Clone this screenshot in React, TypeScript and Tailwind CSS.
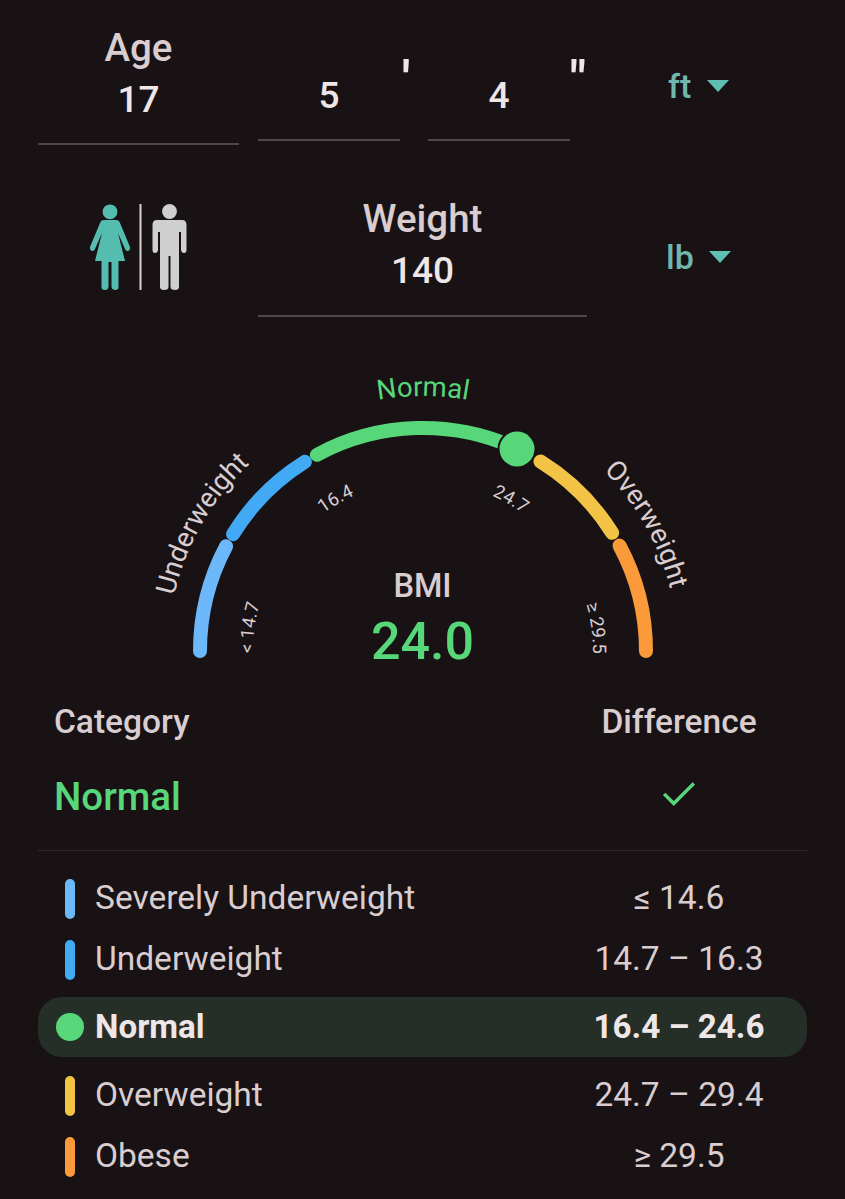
import React from 'react';

const CX = 423;
const CY = 651;

// point on the gauge, deg runs clockwise from the left end
function pt(r: number, deg: number) {
  const a = (deg * Math.PI) / 180;
  return [CX - r * Math.cos(a), CY - r * Math.sin(a)];
}

function arc(r: number, from: number, to: number) {
  const [x1, y1] = pt(r, from);
  const [x2, y2] = pt(r, to);
  return `M ${x1} ${y1} A ${r} ${r} 0 0 1 ${x2} ${y2}`;
}

const segments = [
  { from: 0, to: 28, color: '#6cb8fb' },
  { from: 31.6, to: 58, color: '#42a9f5' },
  { from: 61.6, to: 115, color: '#58d67a' },
  { from: 121.8, to: 148, color: '#f3c345' },
  { from: 151.8, to: 180, color: '#fb9a3a' },
];

const outerLabels = [
  { text: 'Underweight', at: '16.6%', fill: '#d9cdd0' },
  { text: 'Normal', at: '50%', fill: '#58d67a' },
  { text: 'Overweight', at: '83.6%', fill: '#d9cdd0' },
];

const innerLabels = [
  { text: '< 14.7', at: '4.3%' },
  { text: '16.4', at: '33.4%' },
  { text: '24.7', at: '66.7%' },
  { text: '≥ 29.5', at: '95.8%' },
];

const ranges = [
  { name: 'Severely Underweight', range: '≤ 14.6', color: 'bg-[#6cb8fb]' },
  { name: 'Underweight', range: '14.7 – 16.3', color: 'bg-[#42a9f5]' },
  { name: 'Normal', range: '16.4 – 24.6', active: true },
  { name: 'Overweight', range: '24.7 – 29.4', color: 'bg-[#f3c345]' },
  { name: 'Obese', range: '≥ 29.5', color: 'bg-[#fb9a3a]' },
];

function Caret() {
  return <span className="w-0 h-0 border-x-[11px] border-x-transparent border-t-[12px] border-t-[#5fbfb0]" />;
}

function People() {
  return (
    <svg width="140" height="115" viewBox="0 0 140 115" className="block">
      <circle cx="40" cy="21.8" r="7.4" fill="#55bdb0" />
      <path
        d="M34 30 H46 Q49 30 50 33 L60 57 Q60.5 60 58 61 Q56 61.5 55 59 L48 43 L55 71 H48.5 V97 Q48.5 100 45.5 100 Q42 100 41.5 97 V72 H38.5 V97 Q38 100 35 100 Q31.5 100 31.5 97 V71 H25 L32 43 L25 59 Q24 61.5 22 61 Q19.5 60 20 57 L30 33 Q31 30 34 30 Z"
        fill="#55bdb0"
      />
      <rect x="69.5" y="14" width="2" height="86" fill="#d8d2d2" />
      <circle cx="99.5" cy="21.5" r="7.4" fill="#cfcfcf" />
      <path
        d="M87 30 H112 Q116.5 30 116.5 35 V60 Q116.5 63 114 63 Q111.5 63 111 60 V42 H109 V97 Q109 100 105 100 Q100.5 100 100.5 97 V66 H98.5 V97 Q98.5 100 94 100 Q90 100 90 97 V42 H88 V60 Q87.5 63 85 63 Q82.5 63 82.5 60 V35 Q82.5 30 87 30 Z"
        fill="#cfcfcf"
      />
    </svg>
  );
}

function Gauge() {
  return (
    <div className="relative h-[340px]">
      <svg width="845" height="340" viewBox="0 350 845 340" className="block" style={{ fontFamily: 'Roboto, sans-serif' }}>
        <defs>
          <path id="outer" d={arc(255, 0, 180)} />
          <path id="inner" d={arc(170, 0, 180)} />
        </defs>
        {segments.map(s => (
          <path key={s.from} d={arc(223, s.from, s.to)} fill="none" stroke={s.color} strokeWidth="14" strokeLinecap="round" />
        ))}
        <circle cx="517" cy="449" r="19.5" fill="#181214" />
        <circle cx="517" cy="449" r="17.5" fill="#58d67a" />
        {outerLabels.map(l => (
          <text key={l.text} fontSize="27.5" fill={l.fill} textAnchor="middle">
            <textPath href="#outer" startOffset={l.at}>{l.text}</textPath>
          </text>
        ))}
        {innerLabels.map(l => (
          <text key={l.text} fontSize="18.5" fill="#d9cdd0" textAnchor="middle">
            <textPath href="#inner" startOffset={l.at}>{l.text}</textPath>
          </text>
        ))}
      </svg>
      <div className="absolute left-0 right-0 top-[216px] flex flex-col items-center">
        <span className="text-[32.5px] leading-[40px] font-medium text-[#d9cdd0]">BMI</span>
        <span className="text-[52px] leading-[71px] font-medium text-[#58d67a]">24.0</span>
      </div>
    </div>
  );
}

export default function App() {
  return (
    <div className="w-full h-[1199px] overflow-hidden bg-[#181214] font-['Roboto',sans-serif] text-[#d9cdd0]">
      {/* height row */}
      <div className="flex items-start h-[171px] pl-[38px]">
        <div className="w-[201px] h-[145px] pt-[23px] border-b-2 border-[#4f4649] flex flex-col items-center">
          <span className="text-[38.5px] leading-[50px] font-medium">Age</span>
          <span className="text-[37px] leading-[54px] font-medium text-[#efe6e8]">17</span>
        </div>
        <div className="ml-[19px] w-[142px] h-[141px] pt-[71px] border-b-2 border-[#4f4649] text-center text-[37px] leading-[50px] font-medium text-[#efe6e8]">5</div>
        <span className="w-[28px] pl-[2px] pt-[59px] text-left text-[50px] leading-[40px] font-bold text-[#efe6e8]">'</span>
        <div className="w-[142px] h-[141px] pt-[71px] border-b-2 border-[#4f4649] text-center text-[37px] leading-[50px] font-medium text-[#efe6e8]">4</div>
        <span className="w-[16px] pt-[59px] text-center text-[50px] leading-[40px] font-bold text-[#efe6e8]">"</span>
        <div className="ml-[82px] mt-[66px] flex items-center gap-[16px]">
          <span className="text-[34px] leading-[40px] font-medium text-[#6fb7ad]">ft</span>
          <Caret />
        </div>
      </div>

      {/* sex and weight row */}
      <div className="flex items-start h-[179px] pl-[70px]">
        <div className="w-[188px] pt-[19px]">
          <People />
        </div>
        <div className="w-[329px] h-[146px] pt-[23px] border-b-2 border-[#4f4649] flex flex-col items-center">
          <span className="text-[38.5px] leading-[50px] font-medium">Weight</span>
          <span className="text-[37px] leading-[54px] font-medium text-[#efe6e8]">140</span>
        </div>
        <div className="ml-[79px] mt-[66px] flex items-center gap-[15px]">
          <span className="text-[34px] leading-[40px] font-medium text-[#6fb7ad]">lb</span>
          <Caret />
        </div>
      </div>

      <Gauge />

      <div className="mx-[38px] border-b border-[#2e2729] h-[161px]">
        <div className="flex h-[64px] items-center text-[33.5px] font-medium">
          <span className="flex-1 pl-[16px]">Category</span>
          <span className="w-[256px] text-center">Difference</span>
        </div>
        <div className="flex h-[86px] items-center">
          <span className="flex-1 pl-[16px] text-[38.5px] font-medium text-[#58d67a]">Normal</span>
          <span className="w-[256px] flex justify-center pb-[8px]">
            <svg width="42" height="42" viewBox="0 0 24 24" fill="none" stroke="#58d67a" strokeWidth="2">
              <path d="M3.5 12.5 L9 18 L20.5 6.5" />
            </svg>
          </span>
        </div>
      </div>

      <div className="mx-[38px] mt-[17px] text-[33.5px]">
        {ranges.map(r =>
          r.active ? (
            <div key={r.name} className="flex items-center h-[60px] mt-[7px] mb-[8px] rounded-[24px] bg-[#252f27] font-bold text-[#efe6e8]">
              <span className="ml-[18px] w-[28px] h-[28px] rounded-full bg-[#58d67a]" />
              <span className="ml-[12px] flex-1 -translate-x-px text-[33.2px]">{r.name}</span>
              <span className="w-[256px] text-center text-[33.2px]">{r.range}</span>
            </div>
          ) : (
            <div key={r.name} className="flex items-center h-[61px]">
              <span className={`ml-[27px] w-[10px] h-[40px] rounded-full ${r.color}`} />
              <span className="ml-[20px] flex-1">{r.name}</span>
              <span className="w-[256px] text-center">{r.range}</span>
            </div>
          )
        )}
      </div>
    </div>
  );
}
